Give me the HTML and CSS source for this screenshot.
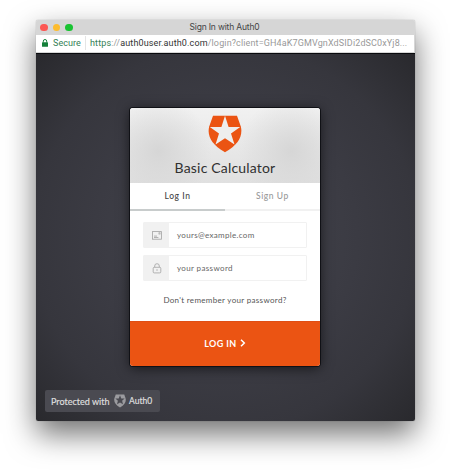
FILE: index.html
```html
<!DOCTYPE html>
<html lang="en">
<head>
<meta charset="utf-8">
<title>Sign In with Auth0</title>
<link rel="stylesheet" href="styles.css">
</head>
<body>
<div class="window">
  <header class="titlebar">
    <div class="lights"><i class="light red"></i><i class="light yellow"></i><i class="light green"></i></div>
    <span class="window-title">Sign In with Auth0</span>
  </header>
  <div class="address">
    <svg class="secure-lock" viewBox="0 0 6 8"><path d="M1.3 3.5V2.2a1.7 1.7 0 0 1 3.4 0v1.3" fill="none" stroke="#15803a"/><rect y="3.2" width="6" height="4.6" rx=".5" fill="#15803a"/></svg>
    <span class="secure">Secure</span>
    <span class="url"><span class="scheme">https</span>://<span class="host">auth0user.auth0.com</span>/login?client=GH4aK7GMVgnXdSIDi2dSC0xYj8...</span>
  </div>
  <main class="page">
    <form class="card">
      <div class="card-head">
        <svg class="logo" viewBox="0 0 34 38"><path fill="#eb5413" d="M5 .7H29L32.8 11.4C35 20.5 31 29.2 17 37.3C3 29.2-1 20.5 1.2 11.4Z"/><path fill="#eee" d="M17 .7L20.6 12H32.2L23 18.6L26.5 29.6L17 23.2L7.5 29.6L11 18.6L1.8 12H13.4Z"/></svg>
        <h1 class="name">Basic Calculator</h1>
      </div>
      <nav class="tabs"><span class="tab active">Log In</span><span class="tab">Sign Up</span></nav>
      <div class="fields">
        <div class="field">
          <span class="field-icon"><svg width="10" height="9" viewBox="0 0 10 9" fill="none" stroke="#a2a2a2" stroke-width=".8"><rect x=".5" y=".6" width="9" height="7.6"/><path d="M2 5.1h3M2 6.5h4.4"/><rect x="7" y="1.8" width="1" height="1.2"/></svg></span>
          <span class="placeholder email">yours@example.com</span>
        </div>
        <div class="field">
          <span class="field-icon"><svg width="10" height="11" viewBox="0 0 10 11" fill="none" stroke="#a2a2a2" stroke-width=".8"><rect x="1.2" y="4.3" width="7.6" height="5.6" rx="1"/><path d="M2.7 4.3V3a2.3 2.3 0 0 1 4.6 0v1.3M5 6.2v1.7"/></svg></span>
          <span class="placeholder password">your password</span>
        </div>
        <span class="forgot">Don't remember your password?</span>
      </div>
      <div class="submit"><span class="submit-text">LOG IN</span><svg class="chevron" viewBox="0 0 6 8"><path d="M1 .8L4.3 4L1 7.2" fill="none" stroke="#fff" stroke-width="1.5"/></svg></div>
    </form>
    <div class="badge">
      <span class="protected">Protected with</span>
      <svg class="badge-logo" viewBox="0 0 34 38"><path fill="#9b9b9f" d="M5 .7H29L32.8 11.4C35 20.5 31 29.2 17 37.3C3 29.2-1 20.5 1.2 11.4Z"/><path fill="#4a4a51" d="M17 3L20.6 12H30L23 18.6L25.5 28L17 23.2L8.5 28L11 18.6L4 12H13.4Z"/></svg>
      <span class="badge-name">Auth0</span>
    </div>
  </main>
</div>
</body>
</html>
```
FILE: styles.css
```css
* { box-sizing: border-box; }
body {
  margin: 0;
  height: 472px;
  padding: 20px 35px 0 36px;
  background: #fff;
  overflow: hidden;
  font-family: Lato, sans-serif;
}
.window {
  width: 379px;
  height: 401px;
  border-radius: 2px;
  box-shadow: 0 13px 30px rgba(0,0,0,.56), 0 0 1px rgba(0,0,0,.45);
  display: flex;
  flex-direction: column;
  white-space: nowrap;
}
.titlebar {
  height: 15px;
  background: #d6d6d6;
  border-radius: 2px 2px 0 0;
  display: grid;
  grid-template-columns: 55px 1fr 57px;
  align-items: center;
  font: 8.5px/15px Inter, sans-serif;
  color: #444;
}
.lights { display: flex; gap: 5px; padding-left: 4px; }
.light { width: 7.6px; height: 7.6px; border-radius: 50%; }
.red { background: #fc5753; }
.yellow { background: #fdbc2e; }
.green { background: #19c332; }
.window-title { text-align: center; letter-spacing: -.17px; }
.address {
  height: 18px;
  padding: 0 5px 1px 6px;
  border: solid #d6d6d6;
  border-width: 0 1px 1px 0;
  background: #fff;
  display: flex;
  align-items: center;
  font: 9px/16px Roboto, sans-serif;
  color: #999;
}
.secure-lock { width: 6px; height: 8px; margin-right: 5px; }
.secure { width: 33px; height: 14px; line-height: 14px; border-right: 1px solid #e5e5e5; color: #338055; letter-spacing: .05px; }
.url { margin-left: 4px; letter-spacing: .13px; }
.scheme { color: #338055; }
.host { color: #333; }
.page {
  height: 368px;
  padding: 54px 0 0 94px;
  border-top: 1px solid #090a0d;
  border-radius: 0 0 2px 2px;
  background: radial-gradient(circle at 50% 50%, #44454d 0, #3b3b43 50%, #36363d 73%, #29292d 100%);
}
.card {
  width: 190px;
  height: 258px;
  border-radius: 3px;
  overflow: hidden;
  background: #fff;
  box-shadow: 0 0 0 1px #101116, 0 2px 13px rgba(0,0,0,.65);
  display: flex;
  flex-direction: column;
}
.card-head {
  height: 75px;
  padding-top: 7px;
  background: radial-gradient(circle at 15% 58%, #d6d6d6 0, rgba(214,214,214,0) 32%), radial-gradient(circle at 85% 58%, #d6d6d6 0, rgba(214,214,214,0) 32%), linear-gradient(#f1f1f1, #e0e0e0);
  display: flex;
  flex-direction: column;
  align-items: center;
}
.logo { width: 34px; height: 38px; }
.name { margin: 5px 0 0; font-size: 14px; line-height: 20px; font-weight: 400; color: #303030; letter-spacing: .18px; }
.tabs { height: 27px; display: grid; grid-template-columns: 1fr 1fr; }
.tab { border-bottom: 2px solid #f1f1f1; text-align: center; font: 500 8.5px/26px Lato, sans-serif; color: #999; letter-spacing: .55px; }
.active { color: #444; border-color: #c8cccc; }
.fields { height: 111px; padding: 12px 13px 0; display: flex; flex-direction: column; }
.field { height: 26px; margin-bottom: 7px; border: 1px solid #f1f1f1; border-radius: 1px; display: flex; color: #666; }
.field-icon { width: 25px; background: #f1f1f1; display: flex; align-items: center; justify-content: center; }
.placeholder { padding-left: 8px; font-size: 8px; line-height: 24px; letter-spacing: .32px; }
.password { letter-spacing: .36px; }
.forgot { padding-top: 5px; text-align: center; font-size: 8px; line-height: 14px; color: #555; letter-spacing: .32px; }
.submit { height: 45px; border-top: 1px solid #df4e15; background: #eb5413; color: #fff; display: flex; justify-content: center; align-items: center; gap: 3px; padding-bottom: 2px; }
.submit-text { font-size: 9px; font-weight: 700; letter-spacing: .4px; }
.chevron { width: 6px; height: 8px; }
.badge { width: 115px; height: 22px; margin: 24px 0 0 -85px; padding-left: 6px; border-radius: 2px; background: #4a4a51; color: #ddd; display: flex; align-items: center; font-size: 9px; }
.protected { width: 63px; letter-spacing: .02px; -webkit-text-stroke: .2px #ddd; }
.badge-logo { width: 12px; height: 14px; }
.badge-name { margin-left: 3px; font-size: 8.5px; -webkit-text-stroke: .2px #ddd; }
```
